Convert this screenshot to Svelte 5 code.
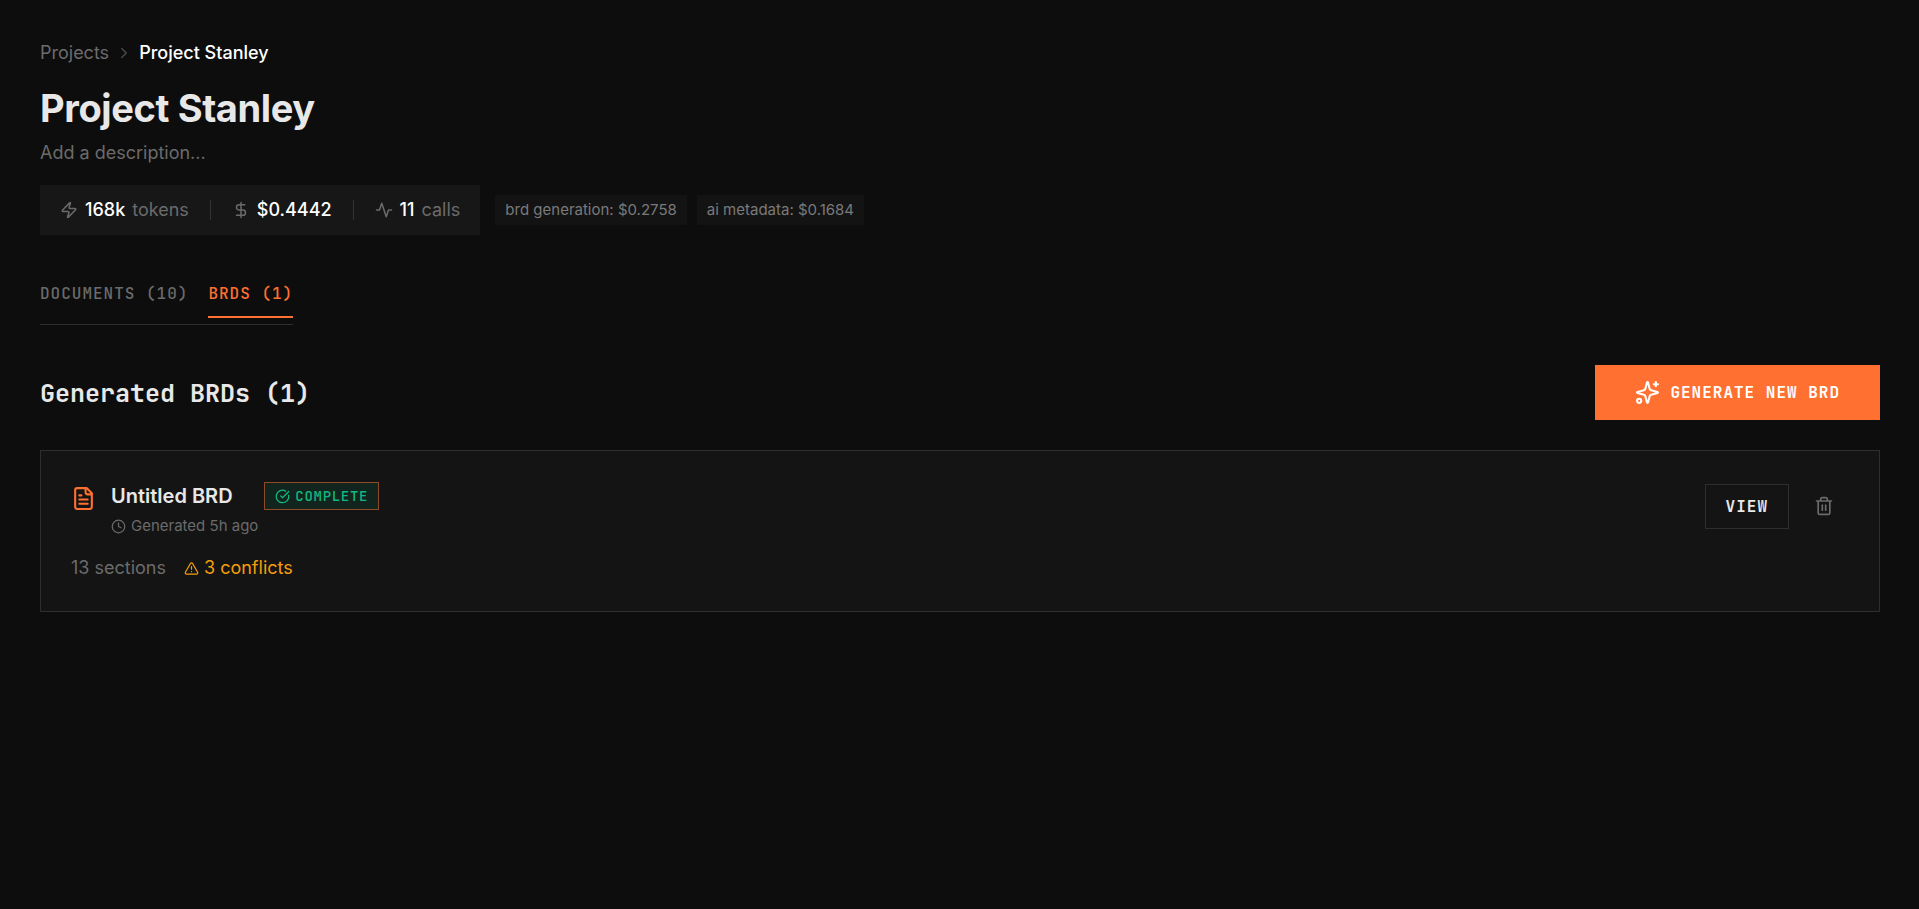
<script>
  let project = $state({ name: 'Project Stanley', description: '' });
  let activeTab = $state('brds');

  const usage = { tokens: '168k', cost: '$0.4442', calls: 11 };
  const breakdown = [
    { name: 'brd generation', cost: '$0.2758' },
    { name: 'ai metadata', cost: '$0.1684' },
  ];
  const tabs = [
    { id: 'documents', label: 'Documents', count: 10 },
    { id: 'brds', label: 'BRDs', count: 1 },
  ];

  let brds = $state([
    { id: 1, title: 'Untitled BRD', status: 'Complete', generated: '5h ago', sections: 13, conflicts: 3 },
  ]);

  function removeBrd(id) {
    brds = brds.filter((b) => b.id !== id);
  }
</script>

<main class="page">
  <nav class="breadcrumb" aria-label="Breadcrumb">
    <a href="#projects">Projects</a>
    <svg class="icon chevron" viewBox="0 0 24 24"><path d="m9 18 6-6-6-6" /></svg>
    <span class="current">{project.name}</span>
  </nav>

  <header class="header">
    <h1>{project.name}</h1>
    <p class="description">{project.description || 'Add a description...'}</p>

    <div class="usage">
      <div class="stats">
        <div class="stat">
          <svg class="icon" viewBox="0 0 24 24"><path d="M4 14a1 1 0 0 1-.78-1.63l9.9-10.2a.5.5 0 0 1 .86.46l-1.92 6.02A1 1 0 0 0 13 10h7a1 1 0 0 1 .78 1.63l-9.9 10.2a.5.5 0 0 1-.86-.46l1.92-6.02A1 1 0 0 0 11 14z" /></svg>
          <strong>{usage.tokens}</strong> <span>tokens</span>
        </div>
        <div class="divider"></div>
        <div class="stat">
          <svg class="icon" viewBox="0 0 24 24"><path d="M12 2v20M17 5H9.500a3.500 3.500 0 0 0 0 7h5a3.500 3.500 0 0 1 0 7H6" /></svg>
          <strong>{usage.cost}</strong>
        </div>
        <div class="divider"></div>
        <div class="stat">
          <svg class="icon" viewBox="0 0 24 24"><path d="M22 12h-4l-3 9L9 3l-3 9H2" /></svg>
          <strong>{usage.calls}</strong> <span>calls</span>
        </div>
      </div>
      <div class="chips">
        {#each breakdown as item}
          <span class="chip">{item.name}: {item.cost}</span>
        {/each}
      </div>
    </div>
  </header>

  <div class="tabs" role="tablist">
    {#each tabs as tab}
      <button
        class="tab"
        class:active={activeTab === tab.id}
        role="tab"
        aria-selected={activeTab === tab.id}
        onclick={() => (activeTab = tab.id)}>{tab.label} ({tab.count})</button>
    {/each}
  </div>

  <div class="section-head">
    <h2>Generated BRDs ({brds.length})</h2>
    <button class="generate">
      <svg class="icon" viewBox="0 0 24 24"><path d="M9.937 15.500A2 2 0 0 0 8.500 14.063l-6.135-1.582a.5.5 0 0 1 0-.962L8.500 9.936A2 2 0 0 0 9.937 8.500l1.582-6.135a.5.5 0 0 1 .963 0L14.063 8.500A2 2 0 0 0 15.500 9.937l6.135 1.581a.5.5 0 0 1 0 .964L15.500 14.063a2 2 0 0 0-1.437 1.437l-1.582 6.135a.5.5 0 0 1-.963 0z" /><path d="M20 2v4M22 4h-4" /><circle cx="4" cy="20" r="2" /></svg>
      Generate New BRD
    </button>
  </div>

  {#each brds as brd (brd.id)}
    <article class="card">
      <div class="card-main">
        <div class="card-title">
          <svg class="icon file" viewBox="0 0 24 24"><path d="M15 2H6a2 2 0 0 0-2 2v16a2 2 0 0 0 2 2h12a2 2 0 0 0 2-2V7Z" /><path d="M14 2v4a2 2 0 0 0 2 2h4M10 9H8M16 13H8M16 17H8" /></svg>
          <div class="title-text">
            <h3>{brd.title}</h3>
            <p class="generated">
              <svg class="icon" viewBox="0 0 24 24"><circle cx="12" cy="12" r="10" /><path d="M12 6v6l4 2" /></svg>
              Generated {brd.generated}
            </p>
          </div>
          <span class="badge">
            <svg class="icon" viewBox="0 0 24 24"><path d="M21.801 10A10 10 0 1 1 17 3.335" /><path d="m9 11 3 3L22 4" /></svg>
            {brd.status}
          </span>
        </div>
        <div class="meta">
          <span>{brd.sections} sections</span>
          <span class="conflicts">
            <svg class="icon" viewBox="0 0 24 24"><path d="m21.730 18-8-14a2 2 0 0 0-3.480 0l-8 14A2 2 0 0 0 4 21h16a2 2 0 0 0 1.730-3M12 9v4M12 17h.01" /></svg>
            {brd.conflicts} conflicts
          </span>
        </div>
      </div>
      <div class="actions">
        <button class="view">View</button>
        <button class="delete" aria-label="Delete {brd.title}" onclick={() => removeBrd(brd.id)}>
          <svg class="icon" viewBox="0 0 24 24"><path d="M3 6h18M19 6v14a2 2 0 0 1-2 2H7a2 2 0 0 1-2-2V6M8 6V4a2 2 0 0 1 2-2h4a2 2 0 0 1 2 2v2M10 11v6M14 11v6" /></svg>
        </button>
      </div>
    </article>
  {/each}
</main>

<style>
  :global(body) { background: #0d0d0d; }

  .page {
    --mono: "JetBrains Mono", "DejaVu Sans Mono", monospace;
    --accent: #ff7031;
    --text: #e8e8e8;
    --muted: #6b6b6b;
    --border: #2e2e2e;
    padding: 40px 39px 40px 40px;
    font-family: Inter, sans-serif;
    font-size: 18px;
    line-height: 26px;
    color: var(--text);
  }
  h1, h2, h3, p { margin: 0; }
  button { border: 0; border-radius: 0; background: none; color: inherit; cursor: pointer; font-family: var(--mono); font-size: 16px; letter-spacing: 1px; text-transform: uppercase; }
  .icon { flex: none; width: 15px; height: 15px; fill: none; stroke: currentColor; stroke-width: 2; stroke-linecap: round; stroke-linejoin: round; }

  .breadcrumb { display: flex; align-items: center; gap: 6px; color: var(--muted); }
  .breadcrumb a { color: inherit; text-decoration: none; }
  .breadcrumb .icon, .stat .icon { width: 18px; height: 18px; }
  .chevron { color: #4a4a4a; }
  .current { color: #fff; font-weight: 500; }

  h1 { margin-top: 16px; font-size: 38px; line-height: 52px; font-weight: 700; letter-spacing: -0.01em; }
  .description { margin-top: 6px; color: var(--muted); }
  .usage { display: flex; align-items: center; gap: 15px; margin-top: 19px; }
  .stats { display: flex; align-items: center; gap: 21px; padding: 12px 20px; background: #171717; }
  .stat { display: flex; align-items: center; gap: 7px; color: var(--muted); }
  .stat strong { color: #fff; font-weight: 500; }
  .divider { width: 1px; height: 20px; background: #333; }
  .chips { display: flex; gap: 10px; }
  .chip { padding: 4px 10px; background: #131313; color: #7a7a7a; font-size: 15px; line-height: 22px; }

  .tabs { display: inline-flex; gap: 20px; margin-top: 44px; padding-bottom: 6px; border-bottom: 1px solid var(--border); }
  .tab { padding: 2px 0 9px; border-bottom: 2px solid transparent; color: var(--muted); font-weight: 500; line-height: 26px; }
  .tab.active { color: var(--accent); border-color: var(--accent); }

  .section-head { display: flex; justify-content: space-between; align-items: center; margin-top: 40px; }
  h2 { font-family: var(--mono); font-size: 25px; line-height: 32px; font-weight: 600; }
  .generate { display: flex; align-items: center; gap: 10px; padding: 15px 40px; background: var(--accent); color: #fff; font-weight: 600; line-height: 25px; }
  .generate .icon, .file { width: 25px; height: 25px; }

  .card { display: flex; justify-content: space-between; align-items: flex-start; margin-top: 30px; padding: 30px; border: 1px solid var(--border); background: #141414; }
  .card-title { display: flex; align-items: flex-start; }
  .file { margin-top: 5px; color: var(--accent); }
  .title-text { margin-left: 15px; }
  h3 { font-size: 20px; line-height: 30px; font-weight: 600; }
  .generated { display: flex; align-items: center; gap: 5px; color: var(--muted); font-size: 15px; line-height: 30px; }
  .badge { display: flex; align-items: center; gap: 5px; margin: 1px 0 0 6px; padding: 0 10px; border: 1px solid #8f4a2a; background: #12241e; color: #10b981; font-family: var(--mono); font-size: 14px; font-weight: 500; line-height: 26px; letter-spacing: 0.05em; text-transform: uppercase; }
  .meta { display: flex; gap: 18px; margin-top: 14px; color: var(--muted); }
  .conflicts { display: flex; align-items: center; gap: 5px; color: #f59e0b; }
  .actions { display: flex; align-items: center; gap: 10px; }
  .view { padding: 10px 20px; border: 1px solid var(--border); font-weight: 600; line-height: 23px; }
  .delete { display: flex; padding: 15px; color: var(--muted); }
  .delete .icon { width: 20px; height: 20px; }
</style>
